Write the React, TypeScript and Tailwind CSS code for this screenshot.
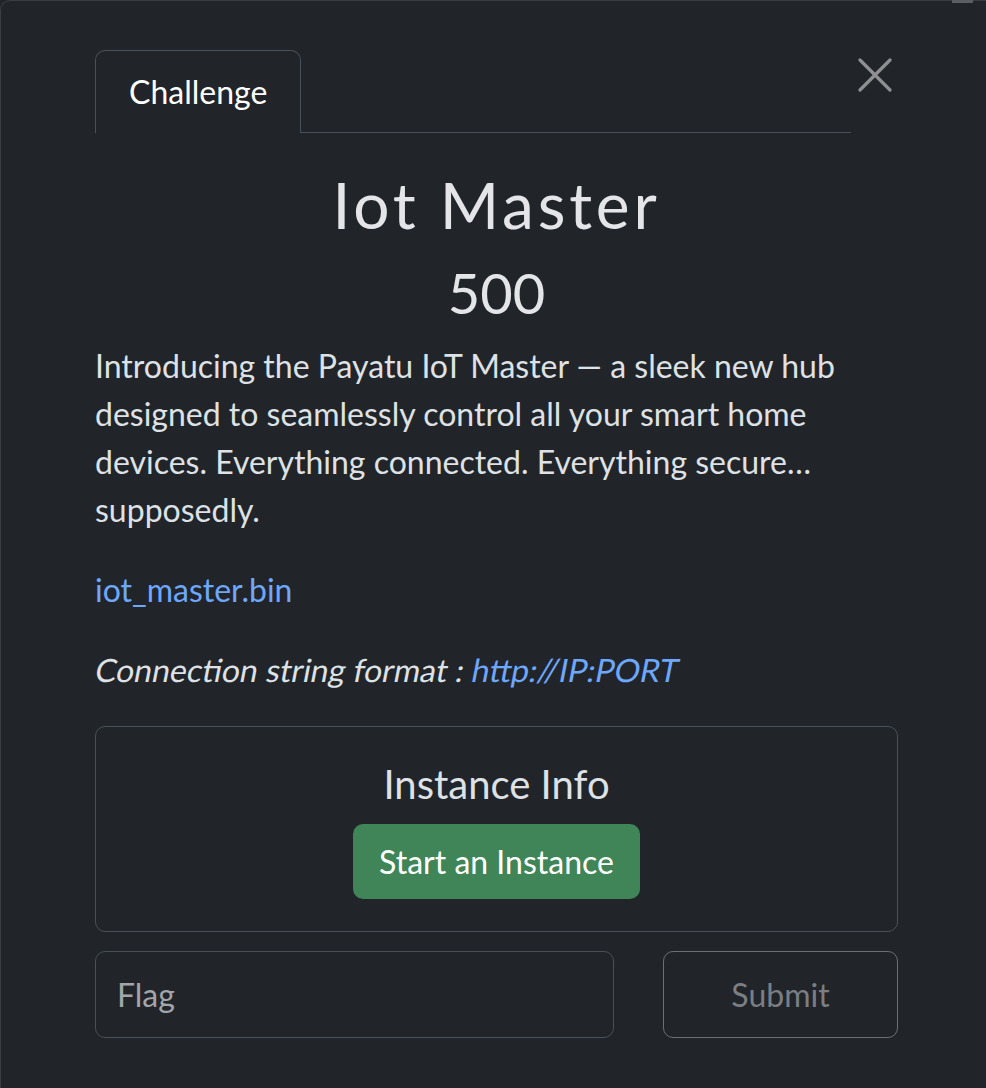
import React from 'react';

export default function App() {
  return (
    <div className="relative h-[1088px] w-[986px] overflow-hidden bg-[#212529] font-['Lato','Liberation_Sans',sans-serif] text-[#dee2e6]">
      {/* scrollbar sliver at the top edge */}
      <div className="absolute right-[13px] top-0 h-[3px] w-[21px] bg-[#5b5e62]" />

      <div className="h-[1100px] w-[1010px] rounded-tl-[10px] border-l border-t border-[#3a3e43] pt-[49px]">
        {/* header: tabs + close */}
        <div className="flex">
          <div className="ml-[94px] flex w-[756px] items-end">
            <div className="flex h-[83px] items-center rounded-t-[10px] border border-b-0 border-[#495057] px-[33px] text-[32px] leading-[48px] text-white">
              Challenge
            </div>
            <div className="h-px flex-1 bg-[#495057]" />
          </div>
          <button className="ml-[7px] mt-[8px] flex h-[34px] w-[34px] items-center justify-center">
            <svg width="34" height="34" viewBox="0 0 34 34" fill="none" stroke="#8e9093" strokeWidth="3.2" strokeLinecap="round">
              <path d="M2 2 L32 32 M32 2 L2 32" />
            </svg>
          </button>
        </div>

        {/* body */}
        <div className="ml-[94px] w-[803px] pt-[33px]">
          <h2 className="mb-[16px] text-center text-[64px] font-normal leading-[77px] tracking-[0.06em] text-[#e3e5e8]">
            Iot Master
          </h2>
          <h3 className="mb-[16px] text-center text-[56px] font-normal leading-[67px] text-[#e3e5e8]">500</h3>

          <p className="mb-[32px] text-[32px] leading-[48px]">
            Introducing the Payatu IoT Master — a sleek new hub designed to seamlessly control all your smart home
            devices. Everything connected. Everything secure… supposedly.
          </p>
          <p className="mb-[32px] text-[32px] leading-[48px]">
            <a className="text-[#6ea8fe]">iot_master.bin</a>
          </p>
          <p className="mb-[32px] text-[32px] leading-[48px]">
            <span className="inline-block origin-[0_58%] -skew-x-[11deg]">
              Connection string format : <a className="text-[#6ea8fe]">http://IP:PORT</a>
            </span>
          </p>

          <div className="flex flex-col items-center rounded-[10px] border border-[#495057] pb-[32px] pt-[33px]">
            <h5 className="mb-[15px] text-[40px] font-normal leading-[48px]">Instance Info</h5>
            <button className="mt-px h-[75px] rounded-[10px] bg-[#408558] px-[26px] text-[32px] leading-[48px] text-white">
              Start an Instance
            </button>
          </div>

          <div className="mt-[19px] grid grid-cols-[519px_1fr] gap-[49px]">
            <div className="flex h-[87px] items-center rounded-[10px] border border-[#495057] px-[21px] text-[32px] text-[#a2a6aa]">
              Flag
            </div>
            <button className="flex h-[87px] items-center justify-center rounded-[10px] border border-[#6c7075] text-[32px] text-[#7b7f84]">
              Submit
            </button>
          </div>
        </div>
      </div>
    </div>
  );
}
